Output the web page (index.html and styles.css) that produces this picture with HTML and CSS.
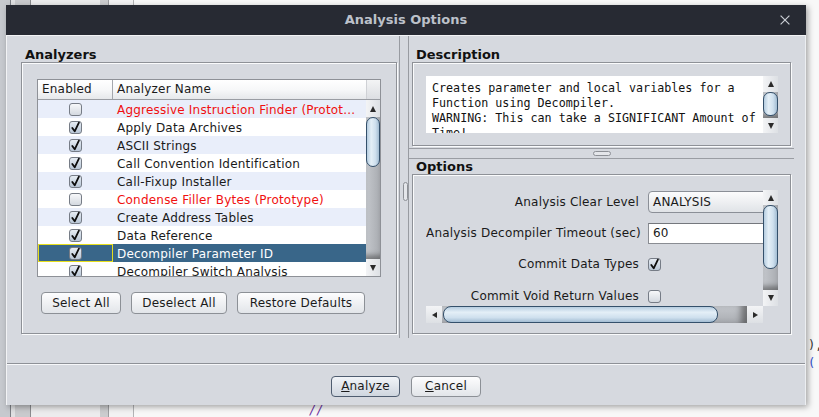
FILE: index.html
```html
<!DOCTYPE html>
<html>
<head>
<meta charset="utf-8">
<title>Analysis Options</title>
<link rel="stylesheet" href="styles.css">
</head>
<body>
<div class="desktop">
  <span class="bg-code bg-slash">//</span>
  <span class="bg-code bg-paren">),</span>
  <span class="bg-code bg-brace">( -</span>
  <div class="dialog">
    <div class="titlebar">
      <span class="tb-spacer"></span>
      <span class="title">Analysis Options</span>
      <svg class="close" width="10" height="10" viewBox="0 0 10 10"><path d="M0.6 0.6 L9.4 9.4 M9.4 0.6 L0.6 9.4" stroke="#c9cdd4" stroke-width="1.2"/></svg>
    </div>
    <div class="body">
      <div class="split">
        <div class="left-pane">
          <div class="sect-title">Analyzers</div>
          <div class="box left-box">
            <div class="table">
              <div class="thead">
                <div class="th th-enabled">Enabled</div>
                <div class="th th-name">Analyzer Name</div>
                <div class="th th-corner"></div>
              </div>
              <div class="tbody">
                <div class="rows">
                  <div class="row odd"><div class="cell-en"><span class="cb"></span></div><div class="cell-name proto">Aggressive Instruction Finder (Protot...</div></div>
                  <div class="row"><div class="cell-en"><span class="cb on"><svg viewBox="0 0 13 13" width="13" height="13"><path d="M3.3 6.9 L5.7 10.3 L9.9 1.6" fill="none" stroke="#0d0d0d" stroke-width="1.8" stroke-linecap="round" stroke-linejoin="round"/></svg></span></div><div class="cell-name">Apply Data Archives</div></div>
                  <div class="row odd"><div class="cell-en"><span class="cb on"><svg viewBox="0 0 13 13" width="13" height="13"><path d="M3.3 6.9 L5.7 10.3 L9.9 1.6" fill="none" stroke="#0d0d0d" stroke-width="1.8" stroke-linecap="round" stroke-linejoin="round"/></svg></span></div><div class="cell-name">ASCII Strings</div></div>
                  <div class="row"><div class="cell-en"><span class="cb on"><svg viewBox="0 0 13 13" width="13" height="13"><path d="M3.3 6.9 L5.7 10.3 L9.9 1.6" fill="none" stroke="#0d0d0d" stroke-width="1.8" stroke-linecap="round" stroke-linejoin="round"/></svg></span></div><div class="cell-name">Call Convention Identification</div></div>
                  <div class="row odd"><div class="cell-en"><span class="cb on"><svg viewBox="0 0 13 13" width="13" height="13"><path d="M3.3 6.9 L5.7 10.3 L9.9 1.6" fill="none" stroke="#0d0d0d" stroke-width="1.8" stroke-linecap="round" stroke-linejoin="round"/></svg></span></div><div class="cell-name">Call-Fixup Installer</div></div>
                  <div class="row"><div class="cell-en"><span class="cb"></span></div><div class="cell-name proto">Condense Filler Bytes (Prototype)</div></div>
                  <div class="row odd"><div class="cell-en"><span class="cb on"><svg viewBox="0 0 13 13" width="13" height="13"><path d="M3.3 6.9 L5.7 10.3 L9.9 1.6" fill="none" stroke="#0d0d0d" stroke-width="1.8" stroke-linecap="round" stroke-linejoin="round"/></svg></span></div><div class="cell-name">Create Address Tables</div></div>
                  <div class="row"><div class="cell-en"><span class="cb on"><svg viewBox="0 0 13 13" width="13" height="13"><path d="M3.3 6.9 L5.7 10.3 L9.9 1.6" fill="none" stroke="#0d0d0d" stroke-width="1.8" stroke-linecap="round" stroke-linejoin="round"/></svg></span></div><div class="cell-name">Data Reference</div></div>
                  <div class="row selected"><div class="cell-en"><span class="cb on"><svg viewBox="0 0 13 13" width="13" height="13"><path d="M3.3 6.9 L5.7 10.3 L9.9 1.6" fill="none" stroke="#0d0d0d" stroke-width="1.8" stroke-linecap="round" stroke-linejoin="round"/></svg></span></div><div class="cell-name">Decompiler Parameter ID</div></div>
                  <div class="row"><div class="cell-en"><span class="cb on"><svg viewBox="0 0 13 13" width="13" height="13"><path d="M3.3 6.9 L5.7 10.3 L9.9 1.6" fill="none" stroke="#0d0d0d" stroke-width="1.8" stroke-linecap="round" stroke-linejoin="round"/></svg></span></div><div class="cell-name">Decompiler Switch Analysis</div></div>
                </div>
                <div class="vscroll table-scroll">
                  <div class="sb-btn sb-up"><span class="arr-up"></span></div>
                  <div class="sb-track"><div class="sb-thumb"></div></div>
                  <div class="sb-btn sb-down"><span class="arr-down"></span></div>
                </div>
              </div>
            </div>
            <div class="btn-row">
              <button class="btn btn-select">Select All</button>
              <button class="btn btn-deselect">Deselect All</button>
              <button class="btn btn-restore">Restore Defaults</button>
            </div>
          </div>
        </div>
        <div class="divider-v"><div class="grip-v"></div></div>
        <div class="right-pane">
          <div class="sect-title">Description</div>
          <div class="box desc-box">
            <div class="textarea">Creates parameter and local variables for a
Function using Decompiler.
WARNING: This can take a SIGNIFICANT Amount of
Time!</div>
            <div class="vscroll desc-scroll">
              <div class="sb-btn sb-up"><span class="arr-up"></span></div>
              <div class="sb-track"><div class="sb-thumb"></div></div>
              <div class="sb-btn sb-down"><span class="arr-down"></span></div>
            </div>
          </div>
          <div class="divider-h"><div class="grip-h"></div></div>
          <div class="sect-title">Options</div>
          <div class="box opts-box">
            <div class="scrollpane">
              <div class="viewport">
                <div class="opts-grid">
                  <div class="opt-label">Analysis Clear Level</div>
                  <div class="opt-field"><div class="combo">ANALYSIS</div></div>
                  <div class="opt-label">Analysis Decompiler Timeout (sec)</div>
                  <div class="opt-field"><div class="textfield">60</div></div>
                  <div class="opt-label">Commit Data Types</div>
                  <div class="opt-field"><span class="cb on"><svg viewBox="0 0 13 13" width="13" height="13"><path d="M3.3 6.9 L5.7 10.3 L9.9 1.6" fill="none" stroke="#0d0d0d" stroke-width="1.8" stroke-linecap="round" stroke-linejoin="round"/></svg></span></div>
                  <div class="opt-label">Commit Void Return Values</div>
                  <div class="opt-field"><span class="cb"></span></div>
                </div>
              </div>
              <div class="vscroll opts-scroll">
                <div class="sb-btn sb-up"><span class="arr-up"></span></div>
                <div class="sb-track"><div class="sb-thumb"></div></div>
                <div class="sb-btn sb-down"><span class="arr-down"></span></div>
              </div>
              <div class="hscroll">
                <div class="sb-btn sb-left"><span class="arr-left"></span></div>
                <div class="hsb-track"><div class="hsb-thumb"></div></div>
                <div class="sb-btn sb-right"><span class="arr-right"></span></div>
              </div>
              <div class="corner"></div>
            </div>
          </div>
        </div>
      </div>
      <div class="footer">
        <button class="btn btn-analyze default"><u>A</u>nalyze</button>
        <button class="btn btn-cancel"><u>C</u>ancel</button>
      </div>
    </div>
  </div>
</div>
</body>
</html>
```

FILE: styles.css
```css
* { box-sizing: border-box; }
html, body { margin: 0; padding: 0; }
body {
  width: 819px;
  height: 417px;
  overflow: hidden;
  font-family: "DejaVu Sans", "Liberation Sans", sans-serif;
  font-size: 12px;
  letter-spacing: 0.2px;
  color: #1a1a1a;
}

.desktop {
  position: relative;
  width: 819px;
  height: 417px;
  background: linear-gradient(to right,
    #c6c9ce 0, #c6c9ce 10px, #7c7f85 10px, #7c7f85 11px,
    #dfe0e2 11px, #dfe0e2 15px, #c9cacd 15px, #c9cacd 30px,
    #8a8b8e 30px, #8a8b8e 31px, #ececed 31px, #ececed 100px,
    #cbccce 100px, #cbccce 108px, #9c9da0 108px, #9c9da0 109px,
    #f2f2f3 109px, #f2f2f3 133px, #b3b4b6 133px, #b3b4b6 134px,
    #f8f8f8 134px);
}

.bg-code {
  position: absolute;
  font-family: "DejaVu Sans Mono", monospace;
  font-size: 12px;
  line-height: 14px;
  letter-spacing: 0;
  white-space: nowrap;
}
.bg-slash { left: 309px; top: 403px; color: #6a2ea0; font-style: italic; }
.bg-paren { left: 808px; top: 338px; color: #333; }
.bg-brace { left: 808px; top: 356px; color: #2d4fd0; }

/* dialog window */
.dialog {
  position: absolute;
  left: 6px;
  top: 5px;
  width: 800px;
  height: 400px;
  display: flex;
  flex-direction: column;
  box-shadow: 2px 2px 6px rgba(0, 0, 0, 0.35);
}

.titlebar {
  height: 30px;
  flex: none;
  background: #272a33;
  display: grid;
  grid-template-columns: 1fr auto 1fr;
  align-items: center;
}
.title {
  font-weight: bold;
  font-size: 13px;
  letter-spacing: 0;
  color: #bcc1ca;
  line-height: 16px;
}
.close {
  justify-self: end;
  margin-right: 16px;
  display: block;
}

.body {
  flex: 1;
  background: #d6d9df;
  border-left: 1px solid #f2f3f5;
  border-top: 1px solid #f2f3f5;
  border-right: 1px solid #eceef1;
  display: flex;
  flex-direction: column;
}

.split {
  height: 302px;
  flex: none;
  display: flex;
}

.left-pane {
  width: 393px;
  flex: none;
  border-right: 1px solid #989ba1;
  padding: 11px 2px 0 14px;
}

.sect-title {
  font-weight: bold;
  font-size: 13px;
  letter-spacing: 0;
  line-height: 15px;
  height: 15px;
  padding-left: 4px;
  color: #111;
}

.box {
  border: 1px solid #8e9197;
  box-shadow: inset 1px 1px 0 #fafbfc, 1px 1px 0 #fafbfc;
}

.left-box {
  width: 376px;
  height: 272px;
  padding: 16px 15px 0 15px;
}

/* table */
.table {
  width: 344px;
  height: 198px;
  border: 1px solid #8e9197;
  background: #fff;
  display: flex;
  flex-direction: column;
}
.thead {
  height: 20px;
  flex: none;
  display: flex;
  border-bottom: 1px solid #9a9da3;
  background: linear-gradient(#ffffff, #f6f7f8 55%, #e6e8eb);
}
.th {
  line-height: 19px;
  padding-left: 4px;
  white-space: nowrap;
}
.th-enabled { width: 75px; border-right: 1px solid #a4a7ad; }
.th-name { flex: 1; }
.th-corner {
  width: 14px;
  padding: 0;
  border-left: 1px solid #cfd1d5;
  background: linear-gradient(#f3f4f5, #dcdee2);
}

.tbody {
  flex: 1;
  display: flex;
  overflow: hidden;
}
.rows {
  flex: 1;
  overflow: hidden;
}
.row {
  height: 18px;
  display: flex;
  background: #fff;
}
.row.odd { background: #e9eefa; }
.row.selected { background: #396689; color: #fff; }
.cell-en {
  width: 75px;
  height: 18px;
  flex: none;
  display: flex;
  justify-content: center;
  align-items: center;
  padding-top: 1px;
}
.row.selected .cell-en { border: 1px solid #e6de1c; }
.cell-name {
  flex: 1;
  height: 18px;
  line-height: 20px;
  padding-left: 4px;
  white-space: nowrap;
  overflow: hidden;
}
.proto { color: #f01010; }

/* checkbox */
.cb {
  display: inline-block;
  width: 13px;
  height: 13px;
  border: 1px solid #767c86;
  border-radius: 3px;
  background: linear-gradient(#f7f8fa, #d4d9e0);
  overflow: visible;
}
.cb.on { background: linear-gradient(#e6ecf3, #b8c6d6); }
.cb svg { display: block; margin: -1px; }

/* scrollbars */
.vscroll {
  width: 14px;
  flex: none;
  display: flex;
  flex-direction: column;
}
.sb-btn {
  flex: none;
  display: flex;
  align-items: center;
  justify-content: center;
  background: linear-gradient(to right, #f3f4f6, #dde0e4);
}
.sb-track {
  flex: 1;
  display: flex;
  flex-direction: column;
  background: linear-gradient(to right, #c4c7cc, #b4b7bc 60%, #a8abb0);
  box-shadow: inset 0 -7px 5px -3px rgba(40, 40, 40, 0.45);
}
.sb-thumb {
  flex: none;
  border: 1px solid #34506b;
  border-radius: 7px;
  background: linear-gradient(to right, #b6cde0, #e4eff7 35%, #cfe0ee 70%, #a3bdd3);
}
.arr-up {
  width: 0; height: 0;
  border-left: 3.5px solid transparent;
  border-right: 3.5px solid transparent;
  border-bottom: 6px solid #2a2a2a;
}
.arr-down {
  width: 0; height: 0;
  border-left: 3.5px solid transparent;
  border-right: 3.5px solid transparent;
  border-top: 6px solid #2a2a2a;
}
.arr-left {
  width: 0; height: 0;
  border-top: 3px solid transparent;
  border-bottom: 3px solid transparent;
  border-right: 5px solid #2a2a2a;
}
.arr-right {
  width: 0; height: 0;
  border-top: 3px solid transparent;
  border-bottom: 3px solid transparent;
  border-left: 5px solid #2a2a2a;
}

.table-scroll .sb-up { height: 17px; }
.table-scroll .sb-thumb { height: 50px; }
.table-scroll .sb-down { height: 17px; }

/* buttons */
.btn {
  display: inline-flex;
  align-items: center;
  justify-content: center;
  padding: 0;
  margin: 0;
  font-family: "DejaVu Sans", "Liberation Sans", sans-serif;
  font-size: 12px;
  letter-spacing: 0.2px;
  line-height: 19px;
  color: #1b1b1b;
  border: 1px solid #8c9096;
  border-radius: 4px;
  background: linear-gradient(#fdfdfe, #e2e5e9);
}
.btn u { text-underline-offset: 1px; }
.btn.default {
  border-color: #4f5d70;
  background: linear-gradient(#f1f4f8, #cfd6df);
}

.btn-row {
  display: flex;
  gap: 10px;
  margin-top: 15px;
  padding-left: 4px;
}
.btn-row .btn { height: 22px; }
.btn-select { width: 80px; }
.btn-deselect { width: 96px; }
.btn-restore { width: 128px; }

/* dividers */
.divider-v {
  width: 8px;
  flex: none;
  display: flex;
  align-items: flex-start;
  justify-content: center;
  padding-top: 146px;
}
.grip-v {
  width: 5px;
  height: 19px;
  margin-left: 2px;
  border: 1px solid #8d9096;
  border-radius: 3px;
  background: #e4e6ea;
}

.right-pane {
  width: 397px;
  flex: none;
  border-left: 1px solid #989ba1;
  padding: 11px 14px 0 3px;
  display: flex;
  flex-direction: column;
}

.desc-box {
  width: 379px;
  height: 84px;
  flex: none;
  padding: 13px 12px 12px 13px;
  display: flex;
}
.textarea {
  width: 337px;
  height: 57px;
  flex: none;
  background: #fff;
  font-family: "DejaVu Sans Mono", "Liberation Mono", monospace;
  font-size: 11.7px;
  letter-spacing: 0;
  line-height: 15px;
  padding: 5px 0 0 6px;
  white-space: pre;
  overflow: hidden;
  color: #111;
}
.desc-scroll { width: 15px; }
.desc-scroll .sb-up { height: 16px; }
.desc-scroll .sb-thumb { height: 24px; }
.desc-scroll .sb-down { height: 15px; }

.divider-h {
  height: 13px;
  flex: none;
  margin: 0 -3px 0 -3px;
  border-bottom: 1px solid #9a9da3;
  background: linear-gradient(#9a9da3, #9a9da3) left 0 top 2px / 100% 1px no-repeat;
  display: flex;
  justify-content: center;
  padding-top: 5px;
}
.grip-h {
  width: 18px;
  height: 5px;
  border: 1px solid #8d9096;
  border-radius: 3px;
  background: #e4e6ea;
}

.opts-box {
  width: 379px;
  height: 160px;
  flex: none;
  padding: 15px 12px 10px 13px;
}
.scrollpane {
  display: grid;
  grid-template-columns: 337px 15px;
  grid-template-rows: 116px 17px;
}
.viewport {
  overflow: hidden;
}
.opts-grid {
  display: grid;
  grid-template-columns: 213px 200px;
  grid-template-rows: 22px 21px 21px 22px;
  column-gap: 9px;
  row-gap: 10px;
  padding-top: 1px;
  align-items: center;
}
.opt-label {
  text-align: right;
  white-space: nowrap;
  line-height: 21px;
}
.opt-field { display: flex; align-items: center; }
.combo {
  width: 200px;
  height: 22px;
  line-height: 20px;
  padding-left: 4px;
  border: 1px solid #8b8f97;
  border-radius: 4px 0 0 4px;
  background: linear-gradient(#fcfcfd, #e0e3e7);
}
.textfield {
  width: 200px;
  height: 21px;
  line-height: 19px;
  padding-left: 4px;
  background: #fff;
  border: 1px solid #8a8d93;
  border-top-color: #74777d;
}
.opts-scroll { width: 15px; }
.opts-scroll .sb-up { height: 15px; }
.opts-scroll .sb-thumb { height: 64px; }
.opts-scroll .sb-down { height: 16px; }

.hscroll {
  display: flex;
  height: 17px;
}
.hscroll .sb-btn {
  width: 16px;
  background: linear-gradient(#f3f4f6, #dde0e4);
}
.hsb-track {
  flex: 1;
  display: flex;
  background: linear-gradient(#c4c7cc, #b4b7bc 60%, #a8abb0);
  box-shadow: inset -9px 0 6px -3px rgba(40, 40, 40, 0.5);
}
.hsb-thumb {
  width: 275px;
  margin-left: 1px;
  border: 1px solid #34506b;
  border-radius: 8px;
  background: linear-gradient(#b6cde0, #e4eff7 35%, #cfe0ee 70%, #a3bdd3);
}
.corner { background: #d6d9df; }

/* footer */
.footer {
  margin-top: auto;
  height: 42px;
  flex: none;
  border-top: 1px solid #8e9197;
  box-shadow: inset 0 1px 0 #f7f8fa;
  padding-top: 12px;
  display: flex;
  justify-content: center;
  gap: 11px;
}
.footer .btn { height: 21px; }
.btn-analyze { width: 69px; }
.btn-cancel { width: 70px; }
```
